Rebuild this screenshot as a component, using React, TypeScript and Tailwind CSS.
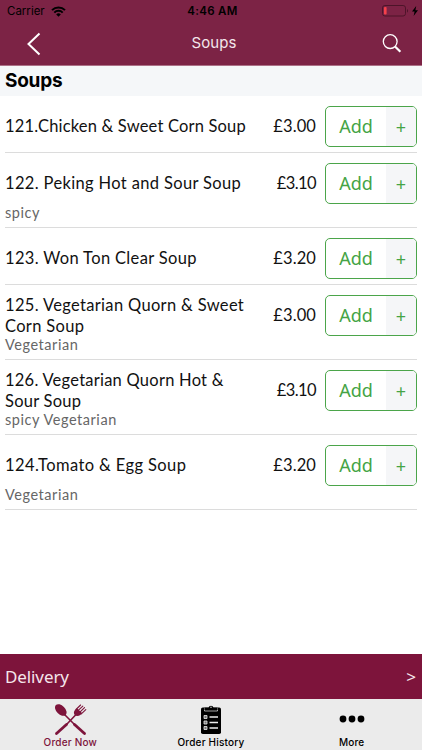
interface MenuItem {
  name: string;
  price: string;
  note?: string;
  tracking: string;
}

const ITEMS: MenuItem[] = [
  { name: "121.Chicken & Sweet Corn Soup", price: "£3.00", tracking: "tracking-[0.18px]" },
  { name: "122. Peking Hot and Sour Soup", price: "£3.10", note: "spicy", tracking: "tracking-[0.35px]" },
  { name: "123. Won Ton Clear Soup", price: "£3.20", tracking: "tracking-[0.34px]" },
  { name: "125. Vegetarian Quorn & Sweet Corn Soup", price: "£3.00", note: "Vegetarian", tracking: "tracking-[0.33px]" },
  { name: "126. Vegetarian Quorn Hot & Sour Soup", price: "£3.10", note: "spicy Vegetarian", tracking: "tracking-[0.24px]" },
  { name: "124.Tomato & Egg Soup", price: "£3.20", note: "Vegetarian", tracking: "tracking-[0.4px]" },
];

function StatusBar() {
  return (
    <div className="grid h-[22px] grid-cols-[1fr_auto_1fr] items-center pl-[7px] pr-[4px] text-[11.5px] text-black">
      <div className="flex items-center gap-[6px] pt-px">
        <span>Carrier</span>
        <svg width="15" height="11" viewBox="0 0 15 11" fill="none" stroke="currentColor" strokeWidth="2">
          <path d="M1 4.1a9.2 9.2 0 0 1 13 0" />
          <path d="M3.3 6.6a5.9 5.9 0 0 1 8.4 0" />
          <path d="M7.5 10.8 5.2 8.4a3.3 3.3 0 0 1 4.6 0z" fill="currentColor" stroke="none" />
        </svg>
      </div>
      <span className="pt-[2px] font-semibold tracking-[0.3px]">4:46 AM</span>
      <div className="flex items-center justify-end gap-[3px]">
        <svg width="27" height="12" viewBox="0 0 27 12">
          <rect x="0.5" y="0.5" width="23" height="10.5" rx="2.4" fill="none" stroke="#4d1429" />
          <rect x="2" y="2" width="2.6" height="7.5" rx="0.8" fill="#f5414a" />
          <path d="M25 4v3.6c1.4-.5 1.4-3.1 0-3.6z" fill="#4d1429" />
        </svg>
        <svg width="6" height="10" viewBox="0 0 6 10" fill="currentColor">
          <path d="M4.2 0 0 5.6h2.6L1.6 10 6 4.2H3.4z" />
        </svg>
      </div>
    </div>
  );
}

function NavBar() {
  return (
    <div className="grid h-[43px] grid-cols-[1fr_auto_1fr] items-center pl-[27px] pr-[20px] text-white">
      <svg width="14" height="24" viewBox="0 0 14 24" fill="none" stroke="currentColor" strokeWidth="2">
        <path d="M12.5 1.5 1.5 12l11 10.5" />
      </svg>
      <span className="mr-[1px] text-[15px] tracking-[0.1px] text-[#f3e6eb]">Soups</span>
      <svg className="justify-self-end" width="20" height="20" viewBox="0 0 20 20" fill="none" stroke="currentColor">
        <circle cx="8.2" cy="7.6" r="6.9" strokeWidth="1.3" />
        <path d="m13 12.500 5.400 5.200" strokeWidth="2.2" />
      </svg>
    </div>
  );
}

function AddButton() {
  return (
    <button type="button" className="flex h-[41px] w-[92px] shrink-0 overflow-hidden rounded-[5px] border border-[#4ba54a] font-['Noto_Sans',sans-serif] text-[#45a445]">
      <span className="flex h-full w-[60px] items-center justify-center text-[18px]">Add</span>
      <span className="flex h-full flex-1 items-center justify-center bg-[#f5f6f8] pt-[2px] text-[18px]">+</span>
    </button>
  );
}

function MenuRow({ item }: { item: MenuItem }) {
  return (
    <li className="border-b border-[#dcdcdc] pt-[10px] pb-[5px]">
      <div className="flex h-[41px] items-center">
        <p className={`w-[248px] text-[16.5px] leading-[20.5px] text-[#111] ${item.tracking}`}>{item.name}</p>
        <p className={`mr-[9px] flex-1 text-right text-[16.5px] text-[#111] ${item.price === "£3.10" ? "tracking-[-0.6px]" : "tracking-[0.1px]"}`}>
          {item.price}
        </p>
        <AddButton />
      </div>
      {item.note && <p className="text-[14.5px] leading-[18px] tracking-[0.55px] text-[#666]">{item.note}</p>}
    </li>
  );
}

function TabBar() {
  return (
    <nav className="grid h-[51px] grid-cols-3 bg-[#ebebeb] font-['Inter',sans-serif] text-[10px] font-medium tracking-[0.2px] text-black">
      <div className="flex flex-col items-center pt-[5px] text-[#7d143b]">
        <svg width="33" height="33" viewBox="0 0 33 33" fill="none" stroke="currentColor" strokeLinecap="round">
          <ellipse cx="6.8" cy="6" rx="4.4" ry="6.9" transform="rotate(-45 6.8 6)" fill="currentColor" stroke="none" />
          <path d="M10 10 20 20" strokeWidth="1.6" />
          <path d="m20.500 20.500 10 9" strokeWidth="2.800" />
          <path d="M23 9.5 13 20" strokeWidth="1.6" />
          <path d="m12.500 20.500-10 9" strokeWidth="2.800" />
          <path d="M21.200 5.800c-1.900 2-1.500 4.200-.4 5.300s3.400 1.500 5.600-.1l1.600-2-5-4.800z" fill="currentColor" stroke="none" />
          <path d="m22 5.500 4.600-4.500M24 6.700l4.800-4.600M25.700 8.300l4.800-4.600M27.300 9.900l4.500-4.200" strokeWidth="1.100" />
        </svg>
        <span className="leading-[10px]">Order Now</span>
      </div>
      <div className="flex flex-col items-center pt-[5px]">
        <svg width="22" height="33" viewBox="0 0 22 33">
          <rect x="1" y="3.500" width="20" height="26.500" rx="1.800" fill="#000" />
          <path d="M4.500 7V3.800h4a2.600 2.600 0 0 1 5 0h4V7z" fill="#000" stroke="#ebebeb" strokeWidth="0.700" />
          <path d="M4.500 3.400h4a2.700 2.700 0 0 1 5 0h4V6h-13z" />
          <circle cx="11" cy="3.300" r="0.700" fill="#ebebeb" />
          <path d="M9.500 13H18M9.500 18.500H18M9.500 24H18" stroke="#ebebeb" strokeWidth="1.300" />
          <path d="M4 11.500h3v3H4zM4 17h3v3H4zM4 22.500h3v3H4z" fill="#777" stroke="#ebebeb" strokeWidth="0.800" />
        </svg>
        <span className="leading-[10px]">Order History</span>
      </div>
      <div className="flex flex-col items-center pt-[5px]">
        <svg width="26" height="33" viewBox="0 0 26 33">
          <circle cx="4" cy="15" r="3.400" />
          <circle cx="13" cy="15" r="3.400" />
          <circle cx="22" cy="15" r="3.400" />
        </svg>
        <span className="leading-[10px]">More</span>
      </div>
    </nav>
  );
}

export default function App() {
  return (
    <div className="flex h-[750px] w-[422px] flex-col overflow-hidden bg-white font-['Lato',sans-serif]">
      <header className="h-[66px] border-b border-[#ac7187] bg-[#7c2345] font-['Inter',sans-serif]">
        <StatusBar />
        <NavBar />
      </header>
      <main className="flex-1">
        <h1 className="flex h-[30px] items-center bg-[#f5f7f9] px-[5px] font-['Inter',sans-serif] text-[19px] font-bold tracking-[-0.25px] text-black">
          Soups
        </h1>
        <ul className="px-[5px]">
          {ITEMS.map((item) => (
            <MenuRow key={item.name} item={item} />
          ))}
        </ul>
      </main>
      <div className="flex h-[45px] items-center justify-between bg-[#7d143b] pl-[5px] pr-[6px] font-['Noto_Sans',sans-serif] text-[17px] text-[#f5e6eb]">
        <span className="tracking-[-0.1px]">Delivery</span>
        <span className="pt-px">&gt;</span>
      </div>
      <TabBar />
    </div>
  );
}
